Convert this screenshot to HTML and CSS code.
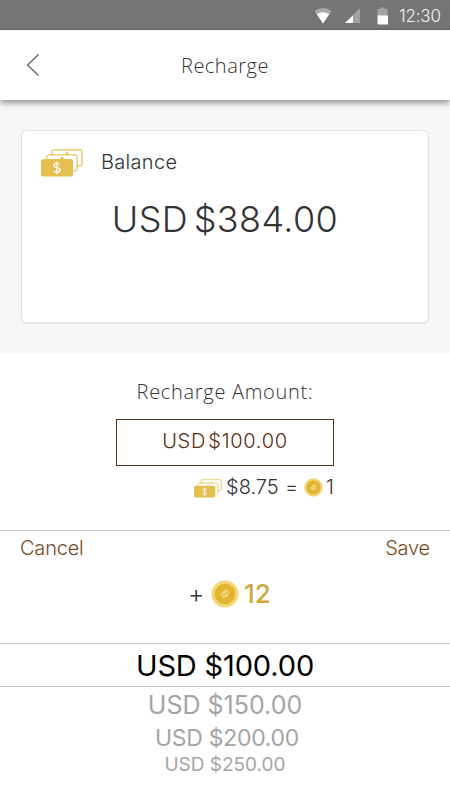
FILE: index.html
```html
<!DOCTYPE html>
<html lang="en">
<head>
    <meta charset="UTF-8">
    <meta name="viewport" content="width=device-width, initial-scale=1.0">
    <title>Recharge</title>
    <link rel="stylesheet" href="styles.css">
</head>
<body>
    <svg class="symbols" width="0" height="0" aria-hidden="true">
        <symbol id="cash" viewBox="0 0 42 28">
            <g fill="#fff" stroke="#e6c255" stroke-width="1.2">
                <rect x="10.8" y="0.8" width="30.2" height="16" rx="2"/>
                <path d="M24.500 5l1.500-1.200 1.500 1.200" fill="none"/>
                <rect x="5.8" y="5.8" width="30.2" height="16" rx="2"/>
                <path d="M19.500 9.500l1.500-1.200 1.500 1.200" fill="none"/>
            </g>
            <rect x="0" y="10" width="32" height="17.5" rx="2.5" fill="#e5bf50"/>
            <path d="M19 15.500c-.8-1-1.800-1.300-3-1.300-1.700 0-2.900.8-2.900 2.200 0 3 6 1.600 6 4.600 0 1.400-1.300 2.300-3.100 2.300-1.400 0-2.500-.5-3.200-1.500M16 12.500v12.500" fill="none" stroke="#fff" stroke-width="1.200"/>
        </symbol>
        <symbol id="coin" viewBox="0 0 28 28">
            <circle cx="14" cy="14" r="13.500" fill="#f5d575"/>
            <circle cx="14" cy="14" r="10.300" fill="#e0b530"/>
            <g transform="rotate(-42 14 14)">
                <ellipse cx="14" cy="14" rx="5" ry="3.300" fill="#f3d577"/>
                <path d="M9 14c3-1.800 6 1.800 10 0" fill="none" stroke="#e0b530" stroke-width="1"/>
            </g>
        </symbol>
    </svg>

    <div class="status-bar">
        <svg class="wifi" width="18" height="16" viewBox="0 0 18 16">
            <path d="M0.500 3.200Q9-3.200 17.500 3.200L9 15.500z" fill="#aaa"/>
            <path d="M2.800 6Q9 2.300 15.200 6L9 15.500z" fill="#fff"/>
        </svg>
        <svg class="signal" width="16" height="16" viewBox="0 0 16 16">
            <path d="M15 0v15H0z" fill="#a3a3a3"/>
            <path d="M8 7.500V15H0z" fill="#fff"/>
        </svg>
        <svg class="battery" width="12" height="18" viewBox="0 0 12 18">
            <path d="M3 0.500h5v1.500h2.500v7h-10V2H3z" fill="#a3a3a3"/>
            <path d="M0.500 8.500h10.500v8a1 1 0 0 1-1 1h-8.500a1 1 0 0 1-1-1z" fill="#fff"/>
        </svg>
        <span class="clock">12:30</span>
    </div>

    <header class="header">
        <svg class="back" width="14" height="24" viewBox="0 0 14 24">
            <path d="M12.500 1.500L1.500 12l11 10.500" fill="none" stroke="#555" stroke-width="1.100"/>
        </svg>
        <h1>Recharge</h1>
    </header>

    <section class="balance-area">
        <div class="card">
            <div class="card-title">
                <svg class="cash-lg"><use href="#cash"/></svg>
                <span>Balance</span>
            </div>
            <div class="balance">USD $384.00</div>
        </div>
    </section>

    <section class="recharge">
        <div class="recharge-label">Recharge Amount:</div>
        <div class="amount">USD $100.00</div>
        <div class="rate">
            <svg class="cash-sm"><use href="#cash"/></svg>
            <span class="price">$8.75</span>
            <span class="equals">=</span>
            <svg class="coin-sm"><use href="#coin"/></svg>
            <span class="one">1</span>
        </div>
    </section>

    <section class="sheet">
        <div class="actions">
            <span class="cancel">Cancel</span>
            <span class="save">Save</span>
        </div>
        <div class="bonus">
            <span class="plus">+</span>
            <svg class="coin-lg"><use href="#coin"/></svg>
            <span class="bonus-value">12</span>
        </div>
        <div class="picker">
            <div class="option selected">USD $100.00</div>
            <div class="option near">USD $150.00</div>
            <div class="option mid">USD $200.00</div>
            <div class="option far">USD $250.00</div>
        </div>
    </section>
</body>
</html>
```
FILE: styles.css
```css
* {
    box-sizing: border-box;
}
body {
    margin: 0;
    height: 800px;
    overflow: hidden;
    background: #fff;
    color: #333;
    font-family: Inter, "Open Sans", sans-serif;
    font-size: 20px;
    font-weight: 300;
    white-space: nowrap;
}
svg {
    display: block;
    flex: none;
}
.symbols {
    position: absolute;
}
.status-bar {
    display: flex;
    align-items: center;
    justify-content: flex-end;
    height: 30px;
    padding: 2px 9px 0 0;
    background: #757575;
    border-bottom: 1px solid #686466;
}
.signal {
    margin-left: 13px;
}
.battery {
    margin-left: 16px;
}
.clock {
    width: 42px;
    margin-left: 10px;
    color: #f2f2f2;
    font-size: 17px;
    letter-spacing: -0.2px;
    line-height: 30px;
}
.header {
    display: flex;
    align-items: center;
    position: relative;
    height: 70px;
    padding-left: 26px;
    background: #fff;
    box-shadow: 0 3px 6px rgba(0, 0, 0, 0.4);
}
h1 {
    margin: 2px 0 0 141px;
    font-family: "Open Sans", sans-serif;
    font-size: 20px;
    font-weight: 300;
    letter-spacing: 0.5px;
    line-height: 30px;
}
.balance-area {
    height: 253px;
    padding: 30px 21px;
    background: #f7f7f7;
}
.card {
    height: 193px;
    background: #fff;
    border: 1px solid #e2e2e2;
    border-radius: 6px;
    box-shadow: 0 1px 2px rgba(0, 0, 0, 0.08);
}
.card-title {
    display: flex;
    align-items: center;
    height: 28px;
    margin: 18px 0 0 19px;
}
.cash-lg {
    width: 42px;
    height: 28px;
}
.card-title span {
    margin: -2px 0 0 18px;
    letter-spacing: 0.3px;
    line-height: 28px;
}
.balance {
    margin-top: 17px;
    text-align: center;
    font-size: 36px;
    letter-spacing: 0.4px;
    line-height: 50px;
    word-spacing: -5px;
}
.recharge {
    height: 177px;
    padding-top: 24px;
}
.recharge-label {
    text-align: center;
    font-family: "Open Sans", sans-serif;
    letter-spacing: 0.7px;
    line-height: 30px;
}
.amount {
    width: 218px;
    height: 47px;
    margin: 12px 0 0 116px;
    border: 1px solid #5a3213;
    color: #5a2c12;
    text-align: center;
    letter-spacing: 0.7px;
    line-height: 42px;
    word-spacing: -4px;
}
.rate {
    display: flex;
    align-items: center;
    height: 28px;
    margin: 7px 0 0 194px;
}
.cash-sm {
    width: 28px;
    height: 19px;
    margin-top: 2px;
}
.price {
    width: 54px;
    margin-left: 4px;
}
.equals {
    width: 12px;
    margin-left: 5px;
}
.coin-sm {
    width: 19px;
    height: 19px;
    margin-left: 7px;
}
.one {
    margin-left: 3px;
}
.sheet {
    border-top: 1px solid #c6c6c6;
}
.actions {
    display: flex;
    justify-content: space-between;
    height: 43px;
    padding: 3px 20px 0;
    color: #7b4a24;
    letter-spacing: -0.2px;
    line-height: 28px;
}
.bonus {
    display: flex;
    align-items: center;
    height: 40px;
    padding-left: 188px;
}
.plus {
    width: 16px;
    font-size: 25px;
}
.coin-lg {
    width: 28px;
    height: 28px;
    margin-left: 7px;
}
.bonus-value {
    margin-left: 5px;
    color: #cfa83b;
    font-size: 26px;
    font-weight: 500;
    line-height: 30px;
}
.picker {
    margin-top: 29px;
    text-align: center;
    color: #a5a5a5;
    font-weight: 400;
}
.selected {
    height: 44px;
    border-top: 1px solid #c6c6c6;
    border-bottom: 1px solid #c6c6c6;
    color: #000;
    font-size: 29px;
    letter-spacing: -0.15px;
    line-height: 43px;
}
.near {
    font-size: 25px;
    line-height: 36px;
}
.mid {
    padding-left: 4px;
    font-size: 23px;
    letter-spacing: -0.3px;
    line-height: 31px;
}
.far {
    font-size: 19px;
    line-height: 21px;
}
```
